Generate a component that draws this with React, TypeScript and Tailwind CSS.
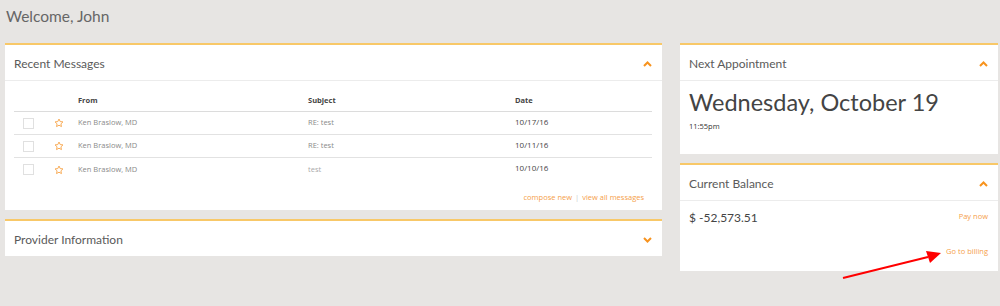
import React from "react";

const ChevronUp = () => (
  <svg width="9" height="6" viewBox="0 0 9 6" className="block">
    <path d="M1 5 L4.5 1.5 L8 5" fill="none" stroke="#f7931e" strokeWidth="2" />
  </svg>
);
const ChevronDown = () => (
  <svg width="9" height="6" viewBox="0 0 9 6" className="block">
    <path d="M1 1 L4.5 4.5 L8 1" fill="none" stroke="#f7931e" strokeWidth="2" />
  </svg>
);
const Star = () => (
  <svg width="10" height="10" viewBox="0 0 24 24" className="block">
    <path
      d="M12 2.5l2.9 6.1 6.6.8-4.9 4.6 1.3 6.6L12 17.3l-5.9 3.3 1.3-6.6-4.9-4.6 6.6-.8z"
      fill="none"
      stroke="#f7a54a"
      strokeWidth="2.2"
      strokeLinejoin="round"
    />
  </svg>
);

const rows = [
  { from: "Ken Braslow, MD", subject: "RE: test", date: "10/17/16" },
  { from: "Ken Braslow, MD", subject: "RE: test", date: "10/11/16" },
  { from: "Ken Braslow, MD", subject: "test", date: "10/10/16" },
];

function CardHeader({ title, down }: { title: string; down?: boolean }) {
  return (
    <div className="flex h-[36px] items-center justify-between border-b border-[#ececec] pl-[9px] pr-[10px] pt-[3px]">
      <span className="text-[12px] text-[#5a5a5a]">{title}</span>
      {down ? <ChevronDown /> : <ChevronUp />}
    </div>
  );
}

export default function App() {
  return (
    <div
      className="relative h-[306px] w-[1000px] bg-[#e7e5e3]"
      style={{ fontFamily: "Lato, 'Open Sans', sans-serif" }}
    >
      <div className="h-[43px] pl-[6px] pt-[5px] text-[15.5px] text-[#666]">Welcome, John</div>
      <div className="flex gap-[18px] pl-[5px] pr-[2px]">
        {/* Left column */}
        <div className="flex w-[657px] flex-col gap-[9px]">
          <div className="h-[167px] border-t-2 border-[#f8c868] bg-white">
            <CardHeader title="Recent Messages" />
            <div className="pl-[9px] pr-[10px]" style={{ fontFamily: "'Open Sans', sans-serif" }}>
              <div className="grid h-[31px] grid-cols-[64px_230px_207px_1fr] items-end border-b border-[#dcdcdc] pb-[5px] text-[7.5px] font-bold text-[#444]">
                <div />
                <div>From</div>
                <div>Subject</div>
                <div>Date</div>
              </div>
              {rows.map((r, i) => (
                <div
                  key={i}
                  className={`grid h-[23px] grid-cols-[64px_230px_207px_1fr] items-center text-[7.5px] ${
                    i < 2 ? "border-b border-[#e2e2e2]" : ""
                  }`}
                >
                  <div className="flex items-center pl-[9px]">
                    <div className="h-[11px] w-[11px] border border-[#e0e0e0]" />
                    <div className="ml-[20px]">
                      <Star />
                    </div>
                  </div>
                  <div className="text-[#8a8a8a]">{r.from}</div>
                  <div className={i === 2 ? "text-[#aaa]" : "text-[#8a8a8a]"}>{r.subject}</div>
                  <div className="-mt-[3px] text-[8px] text-[#444]">{r.date}</div>
                </div>
              ))}
              <div className="flex h-[32px] items-center justify-end pr-[8px] pt-[2px] text-[7.5px] text-[#f5a04a]">
                compose new <span className="mx-[3px] text-[#ccc]">|</span> view all messages
              </div>
            </div>
          </div>
          <div className="h-[37px] border-t-2 border-[#f8c868] bg-white">
            <div className="flex h-[35px] items-center justify-between pl-[9px] pr-[10px] pt-[3px]">
              <span className="text-[12px] text-[#5a5a5a]">Provider Information</span>
              <ChevronDown />
            </div>
          </div>
        </div>
        {/* Right column */}
        <div className="flex w-[318px] flex-col gap-[9px]">
          <div className="h-[111px] border-t-2 border-[#f8c868] bg-white">
            <CardHeader title="Next Appointment" />
            <div className="pl-[9px] pt-[4px] text-[23.5px] leading-[34px] text-[#444]">
              Wednesday, October 19
            </div>
            <div className="pl-[9px] pt-[2px] text-[7.5px] text-[#333]" style={{ fontFamily: "'Open Sans', sans-serif" }}>
              11:55pm
            </div>
          </div>
          <div className="h-[108px] border-t-2 border-[#f8c868] bg-white">
            <CardHeader title="Current Balance" />
            <div className="flex items-start justify-between pl-[9px] pr-[10px] pt-[8px]">
              <span className="text-[12px] text-[#444]">$ -52,573.51</span>
              <span className="pt-[2px] text-[7.5px] text-[#f5a04a]" style={{ fontFamily: "'Open Sans', sans-serif" }}>
                Pay now
              </span>
            </div>
            <div className="flex justify-end pr-[10px] pt-[19px] text-[7.5px] text-[#f5a04a]" style={{ fontFamily: "'Open Sans', sans-serif" }}>
              Go to billing
            </div>
          </div>
        </div>
      </div>
      <svg className="pointer-events-none absolute left-0 top-0" width="1000" height="306">
        <line x1="843" y1="278" x2="928" y2="257" stroke="#ff0000" strokeWidth="2" />
        <polygon points="941,253 926,251 930,263" fill="#ff0000" />
      </svg>
    </div>
  );
}
